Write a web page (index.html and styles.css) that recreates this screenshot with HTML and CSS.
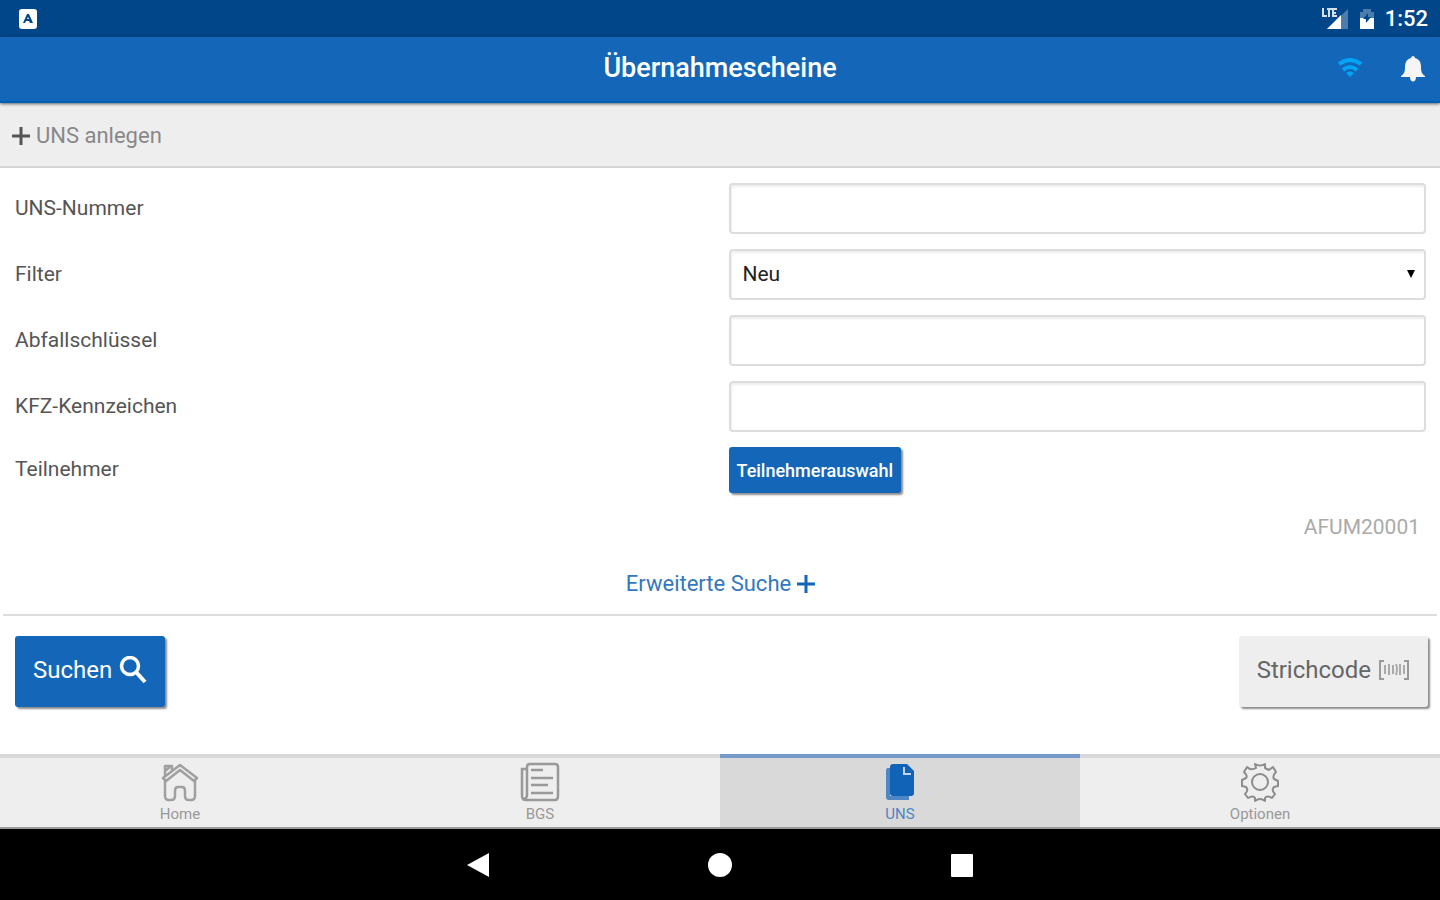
FILE: index.html
```html
<!DOCTYPE html>
<html lang="de">
<head>
  <meta charset="UTF-8">
  <meta name="viewport" content="width=device-width, initial-scale=1">
  <title>Übernahmescheine</title>
  <link rel="stylesheet" href="styles.css">
</head>
<body>

  <div class="statusbar">
    <svg width="18" height="20" viewBox="0 0 18 20">
      <rect width="18" height="20" rx="3" fill="#fff"/>
      <path d="M4 14 L8 5 H10 L14 14 H11 L10 12 H7 L6 14 Z" fill="#004688"/>
      <path d="M8 10 H10 L9 8 Z" fill="#fff"/>
    </svg>
    <div class="status-right">
      <svg width="28" height="24" viewBox="0 0 28 24">
        <path d="M27 2 V22 H6 Z" fill="#4d7dac"/>
        <path d="M20 8 V22 H6 Z" fill="#fff"/>
        <path d="M2 1 V9 H6 M6 2 H11 M8 2 V10 M16 2 H12 V9 H16 M12 6 H15" fill="none" stroke="#d5e0ec" stroke-width="2"/>
      </svg>
      <svg width="16" height="22" viewBox="0 0 16 22">
        <path d="M4 1 H12 V4 H15 V12 H1 V4 H4 Z" fill="#4d7dac"/>
        <path d="M1 10 H6 L8 13 L10 10 H15 V21 H1 Z" fill="#fff"/>
        <path d="M9 5 L4 11 H7 V15 L12 9 H9 Z" fill="#004688"/>
      </svg>
      <span class="time">1:52</span>
    </div>
  </div>

  <header class="header">
    <h1>Übernahmescheine</h1>
    <div class="header-icons">
      <svg width="26" height="22" viewBox="0 0 26 22" fill="none" stroke="#00a5f5" stroke-width="4">
        <path d="M2 6 Q13 -2 24 6"/>
        <path d="M6 12 Q13 6 20 12"/>
        <path d="M9 15 Q13 12 17 15 L13 19 Z" fill="#00a5f5" stroke="none"/>
      </svg>
      <button class="icon-button" aria-label="Benachrichtigungen">
        <svg width="24" height="28" viewBox="0 0 24 28" fill="#f5f5f5">
          <path d="M12 1 C13 1 14 2 14 3 C18 4 20 7 20 12 C20 17 21 19 24 21 V22 H0 V21 C3 19 4 17 4 12 C4 7 6 4 10 3 C10 2 11 1 12 1 Z"/>
          <path d="M9 22 H15 C15 28 9 28 9 22 Z"/>
        </svg>
      </button>
    </div>
  </header>

  <div class="toolbar">
    <button class="create">
      <svg width="18" height="18" viewBox="0 0 18 18" stroke="#555" stroke-width="3">
        <path d="M9 0 V18 M0 9 H18"/>
      </svg>
      UNS anlegen
    </button>
  </div>

  <main class="content">
    <form class="search">
      <div class="row">
        <label for="nummer">UNS-Nummer</label>
        <input type="text" id="nummer">
      </div>
      <div class="row">
        <label for="filter">Filter</label>
        <div class="select">
          <select id="filter">
            <option>Neu</option>
          </select>
          <svg class="arrow" width="10" height="9" viewBox="0 0 10 9"><path d="M1 0 H9 L5 8 Z"/></svg>
        </div>
      </div>
      <div class="row">
        <label for="abfall">Abfallschlüssel</label>
        <input type="text" id="abfall">
      </div>
      <div class="row">
        <label for="kfz">KFZ-Kennzeichen</label>
        <input type="text" id="kfz">
      </div>
      <div class="row">
        <label for="teilnehmer">Teilnehmer</label>
        <button type="button" class="button participant" id="teilnehmer">Teilnehmerauswahl</button>
      </div>
      <p class="participant-id">AFUM20001</p>
      <a class="more" href="#">
        Erweiterte Suche
        <svg width="18" height="18" viewBox="0 0 18 18" stroke="#1467b8" stroke-width="3">
          <path d="M9 0 V18 M0 9 H18"/>
        </svg>
      </a>
    </form>

    <div class="actions">
      <button class="button big">
        Suchen
        <svg width="28" height="28" viewBox="0 0 28 28" fill="none" stroke="#fff">
          <circle cx="11" cy="10" r="8.5" stroke-width="3.5"/>
          <path d="M17 16 L26 26" stroke-width="4"/>
        </svg>
      </button>
      <button class="button big light">
        Strichcode
        <svg width="32" height="22" viewBox="0 0 32 22" fill="none" stroke="#999" stroke-width="2">
          <path d="M6 2 H2 V20 H6 M26 2 H30 V20 H26"/>
          <path d="M7 6 V15 M11 5 V16 M15 6 V15 M22 5 V16 M26 6 V15" stroke="#aaa"/>
          <path d="M18 5 Q20 10 18 16" stroke="#aaa"/>
        </svg>
      </button>
    </div>
  </main>

  <nav class="tabs">
    <a class="tab" href="#">
      <svg width="38" height="40" viewBox="0 0 38 40" fill="none" stroke="#a0a0a0" stroke-width="2.5" stroke-linejoin="round">
        <path d="M2 16 L19 3 L36 16 L33 19 L19 8 L5 19 Z"/>
        <path d="M4 14 V4 H11 V9 M4 9 L9 5"/>
        <path d="M4 18 V34 Q4 38 8 38 H10 Q14 38 14 34 V29 Q14 25 17 25 H21 Q24 25 24 29 V34 Q24 38 28 38 H30 Q34 38 34 34 V18"/>
      </svg>
      Home
    </a>
    <a class="tab" href="#">
      <svg width="40" height="40" viewBox="0 0 40 40" fill="none" stroke="#999" stroke-width="2.5">
        <path d="M7 6 V5 Q7 2 10 2 H35 Q38 2 38 5 V34 Q38 38 35 38 H6 Q2 38 2 34 V7 H7 V33 Q7 36 4 37"/>
        <path d="M11 8 H23 M11 16 H33 M11 23 H28 M11 31 H33"/>
      </svg>
      BGS
    </a>
    <a class="tab active" href="#">
      <svg width="30" height="40" viewBox="0 0 30 40">
        <path d="M2 6 H5 V34 H24 V38 H4 Q1 38 1 35 V8 Z" fill="#4f86c6"/>
        <path d="M8 2 H22 L29 9 V31 Q29 34 26 34 H8 Q5 34 5 31 V5 Q5 2 8 2 Z" fill="#1063b7"/>
        <path d="M19 5 V12 H26" fill="none" stroke="#c4d3e5" stroke-width="2"/>
      </svg>
      UNS
    </a>
    <a class="tab" href="#">
      <svg width="38" height="40" viewBox="0 0 38 40" fill="none" stroke="#8c8c8c" stroke-width="2" stroke-linejoin="round">
        <path d="M15 6 L14 2 Q19 5 24 2 L24 6 L28 8 L32 5 L35 10 Q31 14 33 17 L37 19 V24 L33 25 Q30 28 34 32 L31 36 Q26 33 24 36 V39 Q19 35 14 39 V36 Q12 33 7 36 L4 32 Q8 28 5 25 L1 24 V18 L5 16 Q7 14 3 10 L6 5 Q10 9 15 6 Z"/>
        <circle cx="19" cy="20" r="8"/>
      </svg>
      Optionen
    </a>
  </nav>

  <div class="navbar">
    <button class="icon-button" aria-label="Zurück">
      <svg width="24" height="26" viewBox="0 0 24 26"><path d="M1 13 L23 1 V25 Z" fill="#fff"/></svg>
    </button>
    <button class="icon-button" aria-label="Startseite">
      <svg width="26" height="26" viewBox="0 0 26 26"><circle cx="13" cy="13" r="12" fill="#fff"/></svg>
    </button>
    <button class="icon-button" aria-label="Übersicht">
      <svg width="24" height="24" viewBox="0 0 24 24"><rect x="1" y="1" width="22" height="23" rx="1" fill="#fff"/></svg>
    </button>
  </div>

</body>
</html>
```

FILE: styles.css
```css
* {
  box-sizing: border-box;
}

body {
  display: flex;
  flex-direction: column;
  min-height: 100vh;
  margin: 0;
  background: #fff;
  color: #555;
  font-family: Roboto, sans-serif;
  font-size: 21px;
}

svg {
  display: block;
  flex: none;
}

button,
input,
select {
  font-family: inherit;
  font-size: inherit;
}

button {
  border: none;
  cursor: pointer;
}

.icon-button {
  padding: 0;
  background: none;
}

.statusbar {
  display: flex;
  justify-content: space-between;
  align-items: center;
  height: 37px;
  padding: 0 12px 0 19px;
  background: #004688;
}

.status-right {
  display: flex;
  align-items: center;
  gap: 10px;
}

.time {
  color: #fff;
  font-size: 22px;
  font-weight: 500;
}

.header {
  display: grid;
  grid-template-columns: 1fr auto 1fr;
  align-items: center;
  height: 66px;
  padding: 0 15px;
  background: #1467b8;
  border-bottom: 2px solid #0061b8;
  box-shadow: 0 1px 3px rgba(0,0,0,0.6);
  position: relative;
}

.header h1 {
  grid-column: 2;
  margin: 0;
  padding-bottom: 2px;
  color: #fff;
  font-size: 27px;
  font-weight: 500;
}

.header-icons {
  display: flex;
  justify-content: flex-end;
  align-items: center;
  gap: 38px;
}

.toolbar {
  display: flex;
  align-items: center;
  height: 65px;
  padding: 2px 12px 0;
  background: #eee;
  border-bottom: 2px solid #d5d5d5;
}

.create {
  display: flex;
  align-items: center;
  gap: 6px;
  padding: 0;
  background: none;
  color: #888;
  font-size: 22px;
}

.content {
  flex: 1;
}

.search {
  display: flex;
  flex-direction: column;
  gap: 15px;
  padding: 15px 14px 15px 15px;
}

.row {
  display: grid;
  grid-template-columns: 1fr 1fr;
  gap: 16px;
  align-items: center;
}

.row label {
  padding-bottom: 2px;
}

input,
select {
  width: 100%;
  height: 51px;
  padding: 0 12px;
  border: 2px solid #ddd;
  border-radius: 4px;
  background: #fff;
  box-shadow: inset 1px 2px 2px #eee;
  color: #222;
}

.select {
  position: relative;
}

select {
  display: block;
  padding-bottom: 2px;
  appearance: none;
}

.arrow {
  position: absolute;
  top: 21px;
  right: 10px;
  pointer-events: none;
}

.button {
  border-radius: 3px;
  background: #1467b8;
  box-shadow: 2px 2px 2px rgba(0,0,0,0.45);
  color: #fff;
}

.participant {
  justify-self: start;
  height: 46px;
  padding: 0 8px;
  font-size: 18px;
  font-weight: 500;
}

.participant-id {
  margin: 5px 6px 0 0;
  color: #aaa;
  line-height: 28px;
  text-align: right;
}

.more {
  display: flex;
  align-self: center;
  align-items: center;
  gap: 6px;
  margin-top: 14px;
  color: #3378be;
  font-size: 22px;
  line-height: 28px;
  text-decoration: none;
}

.actions {
  display: flex;
  justify-content: space-between;
  margin: 1px 3px 0;
  padding: 20px 9px 20px 12px;
  border-top: 2px solid #ddd;
}

.big {
  display: flex;
  align-items: center;
  gap: 7px;
  height: 71px;
  padding: 0 18px 3px;
  font-size: 24px;
}

.light {
  background: #eee;
  color: #666;
}

.tabs {
  display: flex;
  background: #eee;
  border-bottom: 2px solid #999;
}

.tab {
  display: flex;
  flex: 1;
  flex-direction: column;
  align-items: center;
  gap: 3px;
  padding: 4px 0;
  border-top: 4px solid #d8d8d8;
  color: #999;
  font-size: 15px;
  line-height: 18px;
  text-decoration: none;
}

.active {
  border-color: #7599c9;
  background: #d9d9d9;
  color: #4f86c6;
}

.navbar {
  display: flex;
  justify-content: center;
  align-items: center;
  gap: 217px;
  height: 71px;
  background: #000;
}
```
